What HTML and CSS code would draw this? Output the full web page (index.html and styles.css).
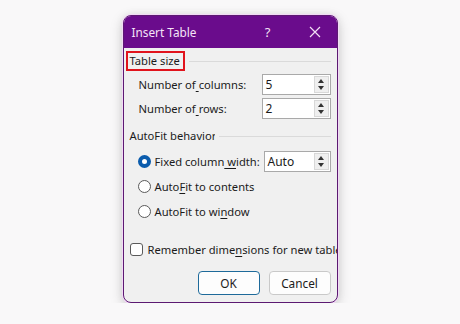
FILE: index.html
```html
<!DOCTYPE html>
<html>
<head>
<meta charset="utf-8">
<link rel="stylesheet" href="styles.css">
</head>
<body>
<div class="dialog">
  <div class="titlebar">
    <span class="title">Insert Table</span>
    <span class="help">?</span>
    <span class="close">
      <svg width="12" height="12" viewBox="0 0 12 12"><path d="M1 1 L11 11 M11 1 L1 11" stroke="#f2dff5" stroke-width="1.2" fill="none"/></svg>
    </span>
  </div>
  <div class="content">
    <div class="group-head first">
      <span class="group-label boxed">Table size</span>
      <span class="rule"></span>
    </div>
    <div class="field-row">
      <span class="label">Number of<u> </u>columns:</span>
      <div class="spin">
        <span class="spin-value">5</span>
        <span class="spin-btns"><span class="up"></span><span class="down"></span></span>
      </div>
    </div>
    <div class="field-row">
      <span class="label">Number of<u> </u>rows:</span>
      <div class="spin">
        <span class="spin-value">2</span>
        <span class="spin-btns"><span class="up"></span><span class="down"></span></span>
      </div>
    </div>
    <div class="group-head second">
      <span class="group-label">AutoFit behavio<span class="clip">r</span></span>
      <span class="rule"></span>
    </div>
    <div class="radio-row fixed">
      <span class="radio on"></span>
      <span class="label tight">Fixed column<u> w</u>idth:</span>
      <div class="spin narrow">
        <span class="spin-value">Auto</span>
        <span class="spin-btns"><span class="up"></span><span class="down"></span></span>
      </div>
    </div>
    <div class="radio-row">
      <span class="radio"></span>
      <span class="label">Auto<u>F</u>it to contents</span>
    </div>
    <div class="radio-row">
      <span class="radio"></span>
      <span class="label">AutoFit to wi<u>n</u>dow</span>
    </div>
    <div class="check-row">
      <span class="checkbox"></span>
      <span class="label nowrap">Remember dime<u>n</u>sions for new tables</span>
    </div>
    <div class="buttons">
      <span class="btn default">OK</span>
      <span class="btn">Cancel</span>
    </div>
  </div>
</div>
</body>
</html>
```
FILE: styles.css
```css
html, body {
  margin: 0;
  padding: 0;
  background: #f9f8f9;
  font-family: "Noto Sans", "Open Sans", sans-serif;
  font-size: 11.2px;
  color: #1b1b1b;
}
.dialog {
  width: 213px;
  height: 286px;
  margin: 15px auto 0;
  border: 1px solid #5c1a72;
  border-radius: 8px;
  background: #f0f0f0;
  overflow: hidden;
  box-shadow: 0 0 0 1px #f3d9f7, 0 4px 14px rgba(0,0,0,0.18), 0 0 8px rgba(0,0,0,0.08);
  display: flex;
  flex-direction: column;
}
.titlebar {
  height: 32px;
  flex: none;
  background: #6a0c8c;
  color: #f4e4f7;
  display: flex;
  align-items: center;
  padding-left: 8px;
  font-size: 11.8px;
}
.title {
  flex: 1;
}
.help {
  width: 14px;
  margin-right: 34px;
  font-size: 13px;
  text-align: center;
}
.close {
  width: 12px;
  margin-right: 16px;
  display: flex;
}
.content {
  flex: 1;
  display: flex;
  flex-direction: column;
  padding: 0 6px 0 2px;
}
.group-head {
  display: flex;
  align-items: center;
  height: 20px;
}
.group-head.first {
  margin-top: 3px;
}
.group-head.second {
  margin-top: 7px;
  padding-left: 4px;
}
.group-label {
  white-space: nowrap;
  line-height: 16px;
}
.group-label.boxed {
  border: 2px solid #e1131c;
  padding: 0 3px 0 2px;
  line-height: 16px;
  height: 16px;
}
.clip {
  display: inline-block;
  width: 3px;
  overflow: hidden;
  vertical-align: top;
}
.rule {
  flex: 1;
  height: 1px;
  background: #dadada;
  margin-left: 4px;
}
.field-row {
  display: flex;
  align-items: center;
  justify-content: space-between;
  height: 21px;
  margin-top: 3px;
  padding-left: 13px;
}
.field-row + .field-row {
  margin-top: 3px;
}
u {
  text-decoration: underline;
  text-underline-offset: 2px;
}
.spin {
  width: 67px;
  height: 19px;
  border: 1px solid #a9a9a9;
  background: #fff;
  display: flex;
  align-items: center;
  box-sizing: content-box;
  font-size: 12px;
}
.spin.narrow {
  width: 65px;
}
.spin-value {
  flex: 1;
  padding-left: 3px;
}
.spin-btns {
  width: 15px;
  height: 17px;
  margin-right: 1px;
  background: #efefef;
  border: 1px solid #d8d8d8;
  box-sizing: border-box;
  display: flex;
  flex-direction: column;
  align-items: center;
  justify-content: space-around;
}
.up, .down {
  width: 0;
  height: 0;
  border-left: 3px solid transparent;
  border-right: 3px solid transparent;
}
.up {
  border-bottom: 4px solid #333;
}
.down {
  border-top: 4px solid #333;
}
.radio-row {
  display: flex;
  align-items: center;
  height: 21px;
  padding-left: 12px;
  margin-top: 4px;
}
.radio-row.fixed {
  margin-top: 5px;
}
.radio {
  width: 13px;
  height: 13px;
  border-radius: 50%;
  border: 1px solid #5a5a5a;
  background: #fff;
  box-sizing: border-box;
  margin-right: 4px;
  flex: none;
}
.radio.on {
  border: 4px solid #0b5cad;
  background: #fff;
}
.label.tight {
  flex: 1;
  white-space: nowrap;
}
.check-row {
  display: flex;
  align-items: center;
  height: 20px;
  margin-top: 17px;
  padding-left: 4px;
}
.checkbox {
  width: 13px;
  height: 13px;
  border: 1px solid #5a5a5a;
  border-radius: 3px;
  background: #fff;
  box-sizing: border-box;
  margin-right: 5px;
  flex: none;
}
.nowrap {
  white-space: nowrap;
}
.buttons {
  display: flex;
  justify-content: flex-end;
  gap: 9px;
  margin-top: 12px;
  padding-right: 0;
}
.btn {
  width: 62px;
  height: 24px;
  border: 1px solid #c9c9c9;
  border-radius: 4px;
  background: #fdfdfd;
  display: flex;
  align-items: center;
  justify-content: center;
  box-sizing: border-box;
  font-size: 11.8px;
}
.btn.default {
  border: 1px solid #1e6a9a;
}
```
